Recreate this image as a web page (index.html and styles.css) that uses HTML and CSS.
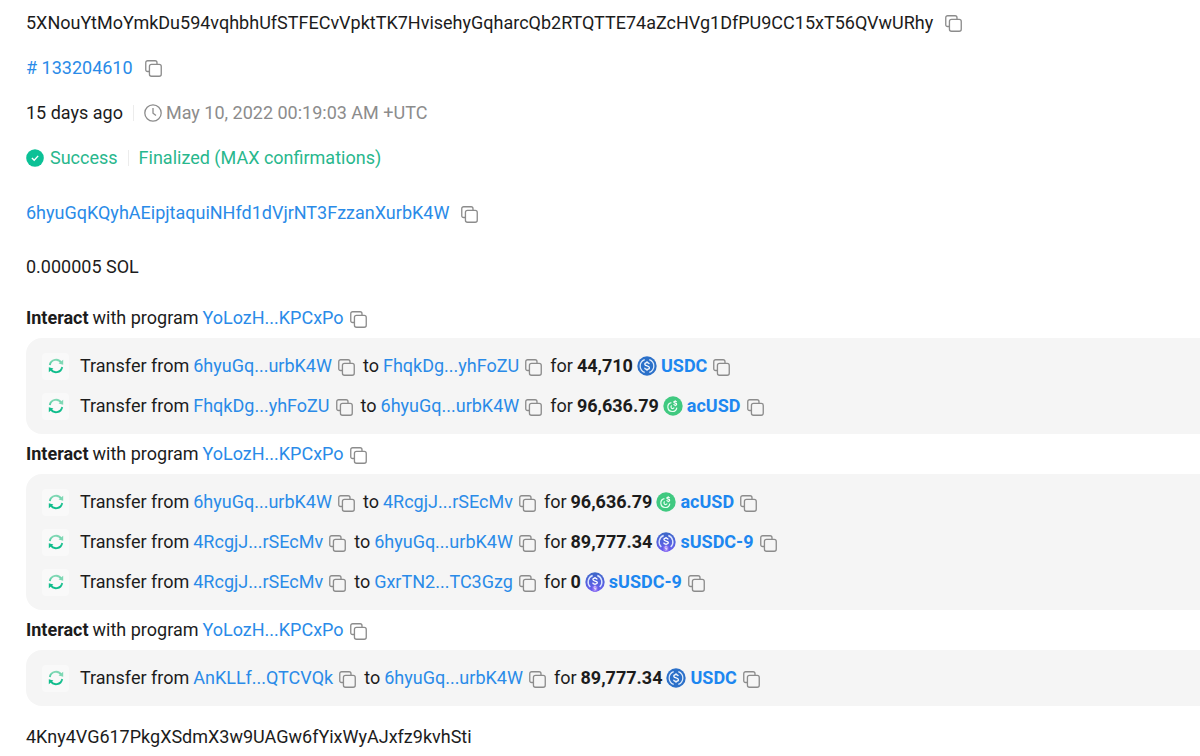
FILE: index.html
```html
<!DOCTYPE html>
<html lang="en">
<head>
<meta charset="utf-8">
<title>Transaction details</title>
<link rel="stylesheet" href="styles.css">
</head>
<body>
<svg class="defs" aria-hidden="true">
  <defs>
    <linearGradient id="swapFill" gradientUnits="userSpaceOnUse" x1="0" y1="1" x2="0" y2="15">
      <stop offset="0.1" stop-color="#7fd8b4"/>
      <stop offset="0.8" stop-color="#10bd8c"/>
    </linearGradient>
    <linearGradient id="saberFill" x1="0" y1="0" x2="0" y2="1">
      <stop offset="0" stop-color="#3c68c8"/>
      <stop offset="1" stop-color="#6a5cf0"/>
    </linearGradient>
  </defs>
  <symbol id="copy" viewBox="0 0 18 18">
    <path d="M4.5 12.2H2.8a2 2 0 0 1-2-2V2.8a2 2 0 0 1 2-2h7.9a2 2 0 0 1 2 2v1.6" fill="none" stroke="#8c8c8c" stroke-width="1.4"/>
    <rect x="4.7" y="4.7" width="12.5" height="12.5" rx="2.2" fill="none" stroke="#8c8c8c" stroke-width="1.4"/>
  </symbol>
  <symbol id="swap" viewBox="0 0 16 16">
    <path d="M1.8 7A6.3 6.3 0 0 1 13.4 4.9M14.2 9A6.3 6.3 0 0 1 2.6 11.1" fill="none" stroke="url(#swapFill)" stroke-width="1.9"/>
    <path d="M15.2 1.8v4.9l-4.6-1.3z" fill="#7fd8b4"/>
    <path d="M.8 14.2V9.3l4.6 1.3z" fill="#10bd8c"/>
  </symbol>
  <symbol id="usdc" viewBox="0 0 20 20">
    <circle cx="10" cy="10" r="9.7" fill="#2b70c9"/>
    <path d="M7.7 3.6a6.8 6.8 0 0 0 0 12.8M12.3 3.6a6.8 6.8 0 0 1 0 12.8" fill="none" stroke="#dce9fa" stroke-width="1.3"/>
    <path d="M12.3 8.2c-.2-1-1-1.5-2.3-1.5s-2.2.6-2.2 1.6c0 2.3 4.6 1 4.6 3.4 0 1-1 1.6-2.4 1.6s-2.3-.6-2.4-1.6M10 5.2v1.5M10 13.3v1.5" fill="none" stroke="#fff" stroke-width="1.3"/>
  </symbol>
  <symbol id="acusd" viewBox="0 0 20 20">
    <circle cx="10" cy="10" r="9.7" fill="#40c980"/>
    <path d="M8.4 6.6a4.5 4.5 0 1 0 5.4 5M8.7 9.6a1.6 1.6 0 1 0 2.4 1.9" fill="none" stroke="#e8fff2" stroke-width="1.2"/>
    <path d="M13.6 5.9c-.3-.6-.8-.7-1.4-.7-.8 0-1.4.3-1.4.9 0 1.4 2.9.6 2.9 2.1 0 .6-.6 1-1.5 1-.8 0-1.4-.3-1.5-1M12.2 4.2v1M12.2 9.2v1" fill="none" stroke="#fff" stroke-width="1.1"/>
  </symbol>
  <symbol id="susdc" viewBox="0 0 20 20">
    <circle cx="10" cy="10" r="9.7" fill="url(#saberFill)"/>
    <path d="M7.7 3.5a6.8 6.8 0 0 0-2.4 11.4M12.3 3.5a6.8 6.8 0 0 1 2.4 11.4" fill="none" stroke="#dbe4ff" stroke-width="1.4"/>
    <path d="M12.2 7.5c-.2-.9-1-1.3-2.2-1.3s-2.1.5-2.1 1.4c0 2.1 4.4.9 4.4 3 0 1-1 1.5-2.3 1.5s-2.2-.6-2.3-1.5M10 4.9v1.3M10 12.1v1.2" fill="none" stroke="#fff" stroke-width="1.3"/>
    <rect x="7.5" y="13.7" width="5" height="6" rx="1" fill="#8f72f2"/>
    <path d="M11 15.5a1 1 0 1 0-.3 1h.4c0 1-.4 1.5-1.6 1.6" fill="none" stroke="#fff" stroke-width=".8"/>
  </symbol>
</svg>

<main class="details">
  <div class="row">
    <span>5XNouYtMoYmkDu594vqhbhUfSTFECvVpktTK7HvisehyGqharcQb2RTQTTE74aZcHVg1DfPU9CC15xT56QVwURhy</span>
    <button class="copy copy-wide" aria-label="Copy signature"><svg><use href="#copy"/></svg></button>
  </div>
  <div class="row">
    <a href="#block"># 133204610</a>
    <button class="copy copy-wide" aria-label="Copy block"><svg><use href="#copy"/></svg></button>
  </div>
  <div class="row">
    <span>15 days ago</span>
    <span class="divider"></span>
    <svg class="status-icon" viewBox="0 0 18 18" aria-hidden="true"><circle cx="9" cy="9" r="8.2" fill="none" stroke="#8c8c8c" stroke-width="1.3"/><path d="M9 4v5.2l3 2.2" fill="none" stroke="#8c8c8c" stroke-width="1.3"/></svg>
    <span class="muted">May 10, 2022 00:19:03 AM +UTC</span>
  </div>
  <div class="row success">
    <svg class="status-icon" viewBox="0 0 18 18" aria-hidden="true"><circle cx="9" cy="9" r="8.8" fill="#0bc196"/><path d="M5.9 9l2.3 2.3 4-4.4" fill="none" stroke="#fff" stroke-width="1.4"/></svg>
    <span class="status-text">Success</span>
    <span class="divider"></span>
    <span>Finalized (MAX confirmations)</span>
  </div>
  <div class="row row-tall signer">
    <a href="#signer">6hyuGqKQyhAEipjtaquiNHfd1dVjrNT3FzzanXurbK4W</a>
    <button class="copy copy-wide" aria-label="Copy signer"><svg><use href="#copy"/></svg></button>
  </div>
  <div class="row row-tall">0.000005 SOL</div>

  <section class="actions">
    <div class="program"><b>Interact</b><span>with program</span><a href="#program">YoLozH...KPCxPo</a><button class="copy" aria-label="Copy program"><svg><use href="#copy"/></svg></button></div>
    <div class="group">
      <div class="transfer"><span class="tile"><svg><use href="#swap"/></svg></span><span>Transfer from</span><a href="#a">6hyuGq...urbK4W</a><button class="copy" aria-label="Copy sender"><svg><use href="#copy"/></svg></button><span>to</span><a href="#b">FhqkDg...yhFoZU</a><button class="copy" aria-label="Copy recipient"><svg><use href="#copy"/></svg></button><span>for</span><b>44,710</b><svg class="coin"><use href="#usdc"/></svg><a class="token" href="#usdc-token">USDC</a><button class="copy" aria-label="Copy token"><svg><use href="#copy"/></svg></button></div>
      <div class="transfer"><span class="tile"><svg><use href="#swap"/></svg></span><span>Transfer from</span><a href="#b">FhqkDg...yhFoZU</a><button class="copy" aria-label="Copy sender"><svg><use href="#copy"/></svg></button><span>to</span><a href="#a">6hyuGq...urbK4W</a><button class="copy" aria-label="Copy recipient"><svg><use href="#copy"/></svg></button><span>for</span><b>96,636.79</b><svg class="coin"><use href="#acusd"/></svg><a class="token" href="#acusd-token">acUSD</a><button class="copy" aria-label="Copy token"><svg><use href="#copy"/></svg></button></div>
    </div>

    <div class="program"><b>Interact</b><span>with program</span><a href="#program">YoLozH...KPCxPo</a><button class="copy" aria-label="Copy program"><svg><use href="#copy"/></svg></button></div>
    <div class="group">
      <div class="transfer"><span class="tile"><svg><use href="#swap"/></svg></span><span>Transfer from</span><a href="#a">6hyuGq...urbK4W</a><button class="copy" aria-label="Copy sender"><svg><use href="#copy"/></svg></button><span>to</span><a href="#c">4RcgjJ...rSEcMv</a><button class="copy" aria-label="Copy recipient"><svg><use href="#copy"/></svg></button><span>for</span><b>96,636.79</b><svg class="coin"><use href="#acusd"/></svg><a class="token" href="#acusd-token">acUSD</a><button class="copy" aria-label="Copy token"><svg><use href="#copy"/></svg></button></div>
      <div class="transfer"><span class="tile"><svg><use href="#swap"/></svg></span><span>Transfer from</span><a href="#c">4RcgjJ...rSEcMv</a><button class="copy" aria-label="Copy sender"><svg><use href="#copy"/></svg></button><span>to</span><a href="#a">6hyuGq...urbK4W</a><button class="copy" aria-label="Copy recipient"><svg><use href="#copy"/></svg></button><span>for</span><b>89,777.34</b><svg class="coin"><use href="#susdc"/></svg><a class="token" href="#susdc-token">sUSDC-9</a><button class="copy" aria-label="Copy token"><svg><use href="#copy"/></svg></button></div>
      <div class="transfer"><span class="tile"><svg><use href="#swap"/></svg></span><span>Transfer from</span><a href="#c">4RcgjJ...rSEcMv</a><button class="copy" aria-label="Copy sender"><svg><use href="#copy"/></svg></button><span>to</span><a href="#d">GxrTN2...TC3Gzg</a><button class="copy" aria-label="Copy recipient"><svg><use href="#copy"/></svg></button><span>for</span><b>0</b><svg class="coin"><use href="#susdc"/></svg><a class="token" href="#susdc-token">sUSDC-9</a><button class="copy" aria-label="Copy token"><svg><use href="#copy"/></svg></button></div>
    </div>

    <div class="program"><b>Interact</b><span>with program</span><a href="#program">YoLozH...KPCxPo</a><button class="copy" aria-label="Copy program"><svg><use href="#copy"/></svg></button></div>
    <div class="group">
      <div class="transfer"><span class="tile"><svg><use href="#swap"/></svg></span><span>Transfer from</span><a href="#e">AnKLLf...QTCVQk</a><button class="copy" aria-label="Copy sender"><svg><use href="#copy"/></svg></button><span>to</span><a href="#a">6hyuGq...urbK4W</a><button class="copy" aria-label="Copy recipient"><svg><use href="#copy"/></svg></button><span>for</span><b>89,777.34</b><svg class="coin"><use href="#usdc"/></svg><a class="token" href="#usdc-token">USDC</a><button class="copy" aria-label="Copy token"><svg><use href="#copy"/></svg></button></div>
    </div>
  </section>

  <div class="blockhash">4Kny4VG617PkgXSdmX3w9UAGw6fYixWyAJxfz9kvhSti</div>
</main>
</body>
</html>
```
FILE: styles.css
```css
* {
  box-sizing: border-box;
}

body {
  margin: 0;
  background: #fff;
  color: #1c1c1c;
  font-family: Roboto, "Liberation Sans", sans-serif;
  font-size: 18px;
  line-height: 24px;
}

a {
  color: #2a8be8;
  text-decoration: none;
}

b {
  font-weight: 700;
}

.defs {
  position: absolute;
  width: 0;
  height: 0;
}

.details {
  padding-left: 26px;
}

.row {
  display: flex;
  align-items: center;
  min-height: 45px;
}

.row-tall {
  min-height: 54px;
}

.signer {
  margin-top: 6px;
}

.copy {
  display: flex;
  flex: none;
  margin: 2px 4px 0 2px;
  padding: 0;
  border: 0;
  background: none;
  cursor: pointer;
}

.copy svg {
  width: 17px;
  height: 17px;
}

.copy-wide {
  margin-left: 12px;
}

.divider {
  width: 1px;
  height: 16px;
  margin: 0 10px;
  background: #ececec;
}

.status-icon {
  flex: none;
  width: 18px;
  height: 18px;
  margin-right: 4px;
}

.muted {
  color: #8c8c8c;
}

.success {
  color: #28b78d;
}

.status-text {
  margin-left: 2px;
}

.actions {
  margin-top: 4px;
}

.program,
.transfer {
  display: flex;
  align-items: center;
  gap: 4px;
  min-height: 40px;
  white-space: nowrap;
}

.group {
  padding: 8px 0 8px 16px;
  border-radius: 16px 0 0 16px;
  background: #f5f5f5;
}

.tile {
  display: flex;
  align-items: center;
  justify-content: center;
  width: 27px;
  height: 27px;
  margin-right: 7px;
  border-radius: 4px;
  background: #f9f9f9;
}

.tile svg {
  width: 16px;
  height: 16px;
}

.coin {
  flex: none;
  width: 20px;
  height: 20px;
}

.token {
  color: #1d87f0;
  font-weight: 700;
}

.blockhash {
  margin-top: 12px;
  padding: 7px 0;
}
```
